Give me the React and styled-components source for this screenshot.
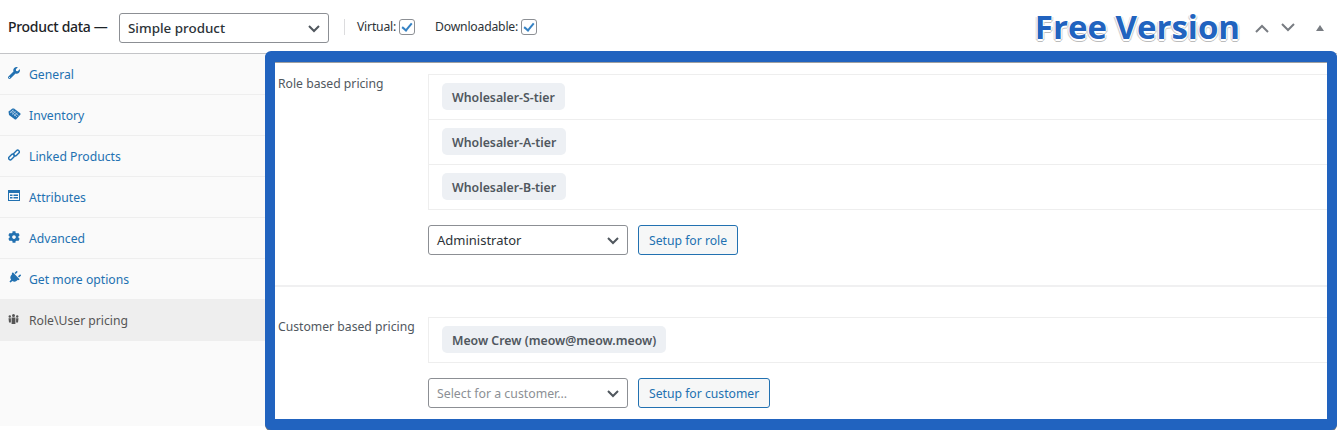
import styled, { createGlobalStyle } from "styled-components";
import { FaWrench, FaCog, FaPlug } from "react-icons/fa";

const TagIcon = () => (
  <svg width="13" height="12" viewBox="0 0 13 12">
    <path d="M0.500 3.500L4.500 0.500H6L12.500 5.500V6.500L8 11.500H7L1 7z" fill="currentColor" />
    <path d="M2.500 3L9 9M4 2L10.500 7.500M2 5l3.500-3M4 6.500L7.500 3.500M6 8l3.500-3" stroke="#b9d2e8" strokeWidth="0.800" fill="none" />
  </svg>
);

const LinkIcon = () => (
  <svg width="12" height="12" viewBox="0 0 12 12" fill="none" stroke="currentColor" strokeWidth="1.400">
    <rect x="0.200" y="6.300" width="6.600" height="3.400" rx="1.700" transform="rotate(-45 3.500 8)" />
    <rect x="5.200" y="2.300" width="6.600" height="3.400" rx="1.700" transform="rotate(-45 8.500 4)" />
  </svg>
);

const AttributesIcon = () => (
  <svg width="12" height="11" viewBox="0 0 12 11" fill="currentColor">
    <path d="M0 0h12v11H0zM1 3v7h10V3zM2 4.500h2.500v1.500H2zM2 7h2.500v1.500H2zM5.500 4.500h4.500v1.500H5.500zM5.500 7h4.500v1.500H5.500z" fillRule="evenodd" />
  </svg>
);

const GroupIcon = () => (
  <svg width="11" height="10" viewBox="0 0 11 10" fill="currentColor">
    <circle cx="5.500" cy="1.500" r="1.500" />
    <circle cx="1.800" cy="2.500" r="1.200" />
    <circle cx="9.200" cy="2.500" r="1.200" />
    <path d="M3.600 3.500h3.800v6.500H3.600zM0.500 4.200h2.400v4.300H1zM8.100 4.200h2.400l-0.500 4.300H8.100z" />
  </svg>
);

const Chevron = () => (
  <svg width="14" height="14" viewBox="0 0 14 14" fill="none" stroke="#50575e" strokeWidth="2">
    <path d="M2 5l5 5 5-5" />
  </svg>
);

const PlugIcon = styled(FaPlug)`
  transform: rotate(45deg);
  font-size: 13px;
`;

const tabs = [
  { label: "General", icon: <FaWrench /> },
  { label: "Inventory", icon: <TagIcon /> },
  { label: "Linked Products", icon: <LinkIcon /> },
  { label: "Attributes", icon: <AttributesIcon /> },
  { label: "Advanced", icon: <FaCog /> },
  { label: "Get more options", icon: <PlugIcon /> },
  { label: "Role\\User pricing", icon: <GroupIcon />, active: true },
];

const App = () => {
  return (
    <Page>
      <GlobalStyle />
      <TopBar>
        <Title>Product data —</Title>
        <Select $width={210} $size={13.400} $weight={500}>
          Simple product
          <Chevron />
        </Select>
        <Divider />
        <Check $gap={20}>
          Virtual:
          <CheckBox>
            <CheckMark />
          </CheckBox>
        </Check>
        <Check>
          Downloadable:
          <CheckBox>
            <CheckMark />
          </CheckBox>
        </Check>
        <FreeVersion>Free Version</FreeVersion>
        <Arrows>
          <svg width="16" height="10" viewBox="0 0 16 10" fill="none" stroke="#787c82" strokeWidth="2">
            <path d="M2 9l6-6 6 6" />
          </svg>
          <svg width="16" height="10" viewBox="0 0 16 10" fill="none" stroke="#787c82" strokeWidth="2">
            <path d="M2 1l6 6 6-6" />
          </svg>
          <Toggle />
        </Arrows>
      </TopBar>
      <Body>
        <Sidebar>
          {tabs.map((tab) => (
            <Tab key={tab.label} $active={tab.active}>
              <TabIcon>{tab.icon}</TabIcon>
              {tab.label}
            </Tab>
          ))}
        </Sidebar>
        <Frame>
          <Section $pad={12} $bottom={30}>
            <FieldLabel>Role based pricing</FieldLabel>
            <FieldBody>
              <Rows>
                <Row>
                  <Chip>Wholesaler-S-tier</Chip>
                </Row>
                <Row>
                  <Chip>Wholesaler-A-tier</Chip>
                </Row>
                <Row>
                  <Chip>Wholesaler-B-tier</Chip>
                </Row>
              </Rows>
              <Controls>
                <Select $size={13}>
                  Administrator
                  <Chevron />
                </Select>
                <Button>Setup for role</Button>
              </Controls>
            </FieldBody>
          </Section>
          <Section $pad={30} $bottom={0} $line>
            <FieldLabel>Customer based pricing</FieldLabel>
            <FieldBody>
              <Rows>
                <Row>
                  <Chip>Meow Crew (meow@meow.meow)</Chip>
                </Row>
              </Rows>
              <Controls>
                <Select $muted $size={12.300}>
                  Select for a customer...
                  <Chevron />
                </Select>
                <Button>Setup for customer</Button>
              </Controls>
            </FieldBody>
          </Section>
        </Frame>
      </Body>
    </Page>
  );
};

export default App;

const GlobalStyle = createGlobalStyle`
  html, body {
    margin: 0;
    background: #fff;
    overflow: hidden;
  }
  body {
    font-family: "Noto Sans", "Open Sans", sans-serif;
    font-size: 12.200px;
    color: #3c434a;
  }
`;

const Page = styled.div`
  width: 1337px;
  height: 430px;
  display: flex;
  flex-direction: column;
`;

const TopBar = styled.div`
  height: 54px;
  flex-shrink: 0;
  box-sizing: border-box;
  border-bottom: 1px solid #c3c4c7;
  padding: 3px 0 0 8px;
  display: flex;
  align-items: center;
`;

const Title = styled.div`
  width: 111px;
  font-size: 14px;
  font-weight: 500;
  color: #1d2327;
  letter-spacing: -0.300px;
  margin-top: -3px;
`;

const Select = styled.div`
  width: ${(p) => p.$width || 200}px;
  height: 30px;
  box-sizing: border-box;
  border: 1px solid #8c8f94;
  border-radius: 3px;
  background: #fff;
  padding: 0 7px 0 8px;
  display: flex;
  align-items: center;
  justify-content: space-between;
  font-size: ${(p) => p.$size}px;
  font-weight: ${(p) => p.$weight || 400};
  color: ${(p) => (p.$muted ? "#8c8f94" : "#2c3338")};
`;

const Divider = styled.div`
  width: 1px;
  height: 16px;
  background: #dcdcde;
  margin: -3px 12px 0 15px;
`;

const Check = styled.label`
  display: flex;
  align-items: center;
  gap: 3px;
  font-size: 12.200px;
  letter-spacing: -0.200px;
  color: #2c3338;
  margin-top: -3px;
  margin-right: ${(p) => p.$gap || 0}px;
`;

const CheckBox = styled.span`
  width: 16px;
  height: 16px;
  box-sizing: border-box;
  border: 1px solid #8c8f94;
  border-radius: 3px;
  position: relative;
  background: #fff;
`;

const CheckMark = styled.span`
  position: absolute;
  left: 4px;
  top: 1px;
  width: 4px;
  height: 8px;
  border: solid #3582c4;
  border-width: 0 2px 2px 0;
  transform: rotate(40deg);
`;

const FreeVersion = styled.div`
  margin-left: auto;
  font-family: "Open Sans", sans-serif;
  font-size: 33px;
  font-weight: 700;
  line-height: 44px;
  color: #2163bf;
  text-shadow: 1px 0 #fff, -1px 0 #fff, 0 -1px #fff, 0 2px #fff, 1px 2px #ccc, -1px 2px #ccc, 2px 1px #ddd, -2px 1px #ddd,
    0 3px #bbb;
  margin-top: -3px;
`;

const Arrows = styled.div`
  width: 97px;
  padding-left: 14px;
  box-sizing: border-box;
  display: flex;
  align-items: center;
  gap: 10px;
`;

const Toggle = styled.span`
  margin-left: 10px;
  width: 0;
  height: 0;
  border-left: 4px solid transparent;
  border-right: 4px solid transparent;
  border-bottom: 6px solid #787c82;
`;

const Body = styled.div`
  flex: 1;
  display: flex;
  min-height: 0;
`;

const Sidebar = styled.div`
  width: 265px;
  height: 372px;
  flex-shrink: 0;
  background: #fafafa;
`;

const Tab = styled.div`
  height: 41px;
  box-sizing: border-box;
  padding-left: 8px;
  display: flex;
  align-items: center;
  border-bottom: ${(p) => (p.$active ? "none" : "1px solid #eee")};
  background: ${(p) => (p.$active ? "#eee" : "transparent")};
  color: ${(p) => (p.$active ? "#555" : "#2271b1")};
  font-size: 12.200px;
`;

const TabIcon = styled.span`
  width: 21px;
  display: flex;
  align-items: center;
  font-size: 12px;
  margin-top: -3px;
`;

const Frame = styled.div`
  flex: 1;
  margin-top: -3px;
  height: 379px;
  box-sizing: border-box;
  border: 10px solid #2163bf;
  border-top-width: 11px;
  border-bottom-width: 11px;
  border-radius: 6px;
  background: #fff;
  box-shadow: 0 1px 0 #777, inset 0 1px 0 #a0a0a0;
  position: relative;
`;

const Section = styled.div`
  display: flex;
  padding-top: ${(p) => p.$pad}px;
  padding-bottom: ${(p) => p.$bottom}px;
  border-top: ${(p) => (p.$line ? "2px solid #f0f0f1" : "none")};
`;

const FieldLabel = styled.div`
  width: 153px;
  padding: 1px 0 0 3px;
  box-sizing: border-box;
  font-size: 12.200px;
  line-height: 18px;
  color: #50575e;
`;

const FieldBody = styled.div`
  flex: 1;
`;

const Rows = styled.div`
  border-top: 1px solid #eee;
  border-left: 1px solid #eee;
`;

const Row = styled.div`
  height: 45px;
  box-sizing: border-box;
  padding: 8px 13px 0;
  border-bottom: 1px solid #eee;
`;

const Chip = styled.span`
  display: inline-flex;
  align-items: center;
  height: 27px;
  box-sizing: border-box;
  padding: 1px 10px 0;
  border-radius: 5px;
  background: #edf0f4;
  font-size: 12.300px;
  font-weight: 600;
  color: #50575e;
`;

const Controls = styled.div`
  display: flex;
  gap: 10px;
  margin-top: 15px;
`;

const Button = styled.button`
  height: 30px;
  padding: 0 10px;
  box-sizing: border-box;
  border: 1px solid #2271b1;
  border-radius: 3px;
  background: #f6f7f7;
  color: #2271b1;
  font-family: inherit;
  font-size: 12.200px;
`;
